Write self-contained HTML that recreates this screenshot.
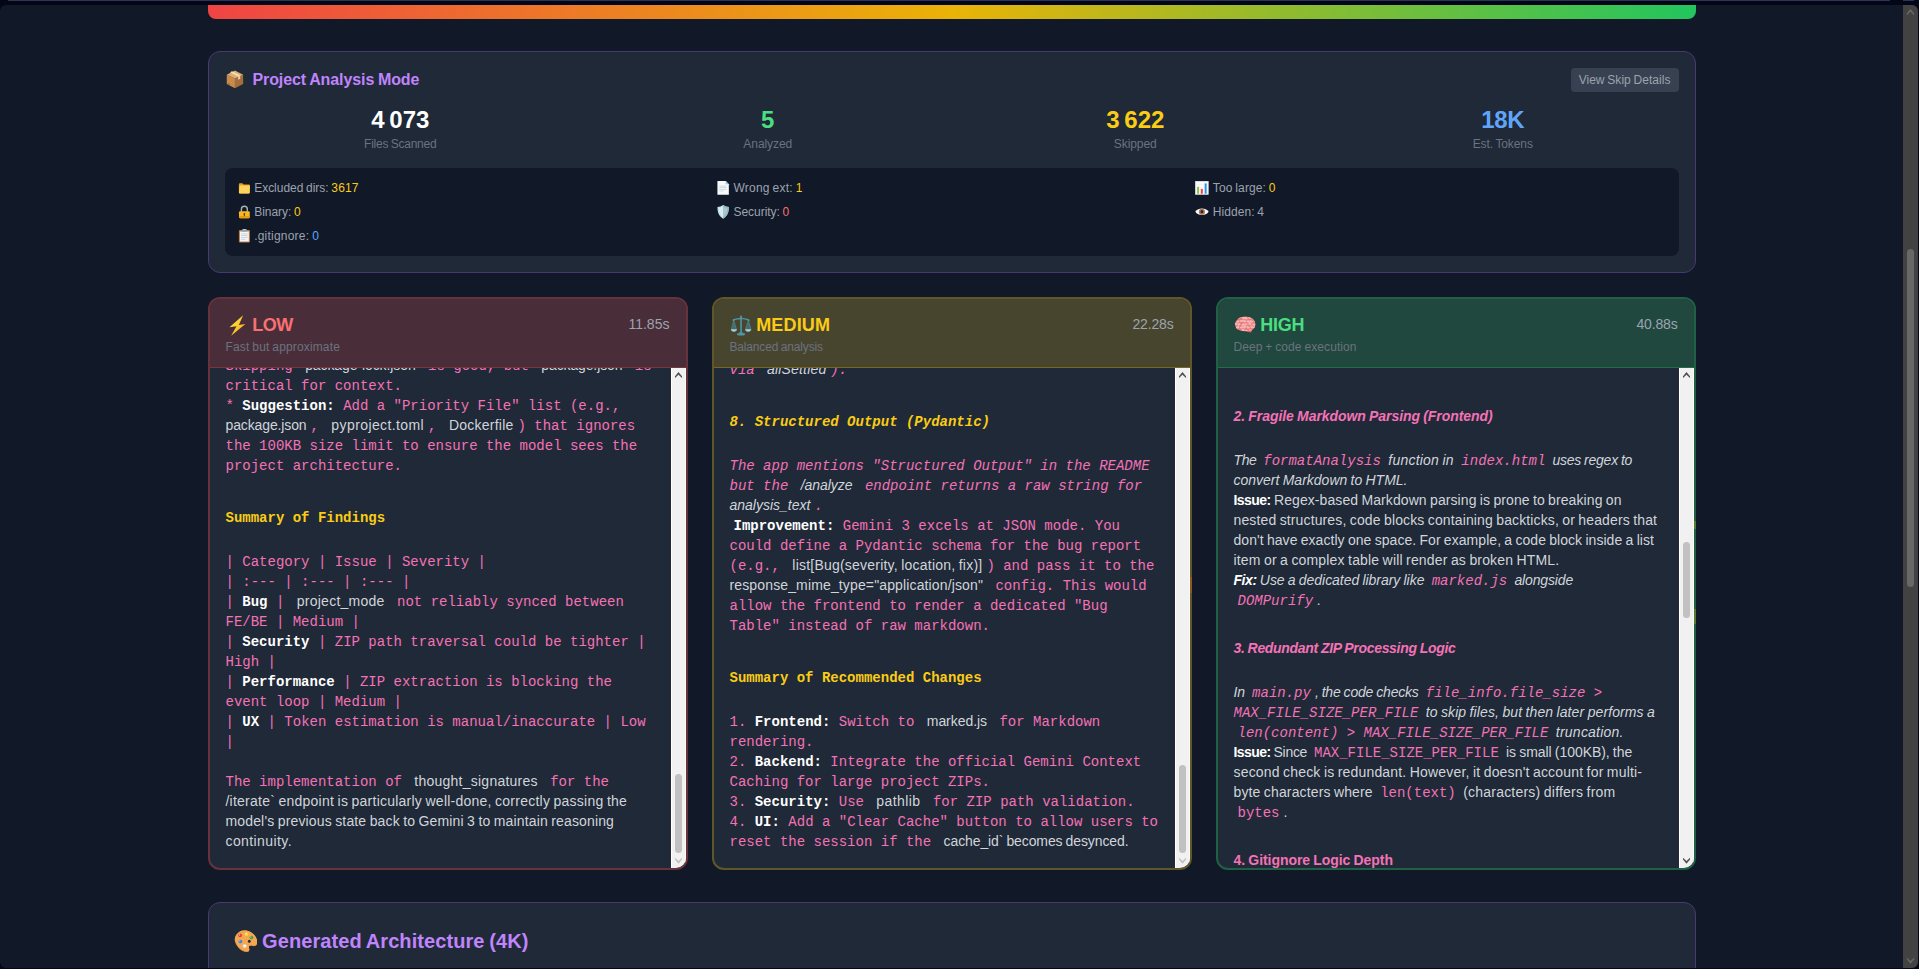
<!DOCTYPE html>
<html><head><meta charset="utf-8"><title>Project Analysis</title>
<style>
*{box-sizing:border-box}
html,body{margin:0;padding:0}
body{width:1919px;height:969px;overflow:hidden;position:relative;background:#030617;font-family:"Liberation Sans", sans-serif;color:#fff}
.em{display:inline-block;width:1.245em;height:1.174em;vertical-align:-0.247em}
#strip1{position:absolute;left:8px;top:0;width:1882px;height:1px;background:#2b3452}
#strip2{position:absolute;left:1903px;top:0;width:11px;height:1px;background:#2b3452}
#page{position:absolute;left:0;top:5px;width:1918px;height:963px;background:#111827;border-radius:6px;overflow:hidden}
#bar{position:absolute;left:208px;top:0;width:1488px;height:14px;border-radius:0 0 8px 8px;background:linear-gradient(to right,#ef4444,#eab308,#22c55e)}
.panel{position:absolute;left:208px;width:1488px;background:#1f2937;border:1px solid #4b3774;border-radius:12px}
#p1{top:46px;height:222px;padding:16px 16.5px 16px 15.5px}
#p1 .hd{display:flex;justify-content:space-between;align-items:center;height:24px;margin-bottom:12px}
#p1 .ttl{font-size:16px;line-height:24px;font-weight:700;color:#c084fc;white-space:pre}
#p1 .btn{font-size:12px;line-height:16px;padding:4px 8px;background:#374151;color:#9ca3af;border-radius:4px;white-space:pre}
.stats{display:grid;grid-template-columns:repeat(4,1fr);column-gap:16px;text-align:center}
.num{font-size:24px;line-height:32px;font-weight:700;white-space:pre}
.lab{font-size:12px;line-height:16px;color:#6b7280;white-space:pre}
.skips{margin-top:16px;background:#111827;border-radius:8px;padding:12px;height:88px;display:grid;grid-template-columns:repeat(3,1fr);column-gap:8px;row-gap:8px;font-size:12px;line-height:16px;color:#9ca3af}
.sk{white-space:pre;height:16px}
.col{position:absolute;top:292px;width:480px;height:573px;border-radius:12px;border:2px solid;overflow:hidden;background:#1f2937}
.col.low{border-color:#67323c}
.col.med{border-color:#615627}
.col.high{border-color:#206045}
.chead{position:relative;height:69px;border-bottom:1px solid;padding:12px 16px 0 15.5px}
.low .chead{background:#492e3a;border-bottom-color:#7b353d}
.med .chead{background:#48452e;border-bottom-color:#796623}
.high .chead{background:#20483f;border-bottom-color:#216e48}
.ctitle{font-size:18px;line-height:28px;font-weight:700;white-space:pre;margin-left:-1px}
.ctitle .em{margin-left:1px;vertical-align:calc(-0.247em - 0.5px)}
.low .ctitle{color:#f87171} .med .ctitle{color:#facc15} .high .ctitle{color:#4ade80}
.ctime{position:absolute;right:16.5px;top:11px;font-size:14px;line-height:28px;color:#9ca3af;white-space:pre}
.csub{font-size:12px;line-height:16px;color:#6b7280;white-space:pre}
.cbody{position:relative;height:500px;overflow:hidden;font-size:14px;line-height:20px;color:#d1d5db}
.ln{position:absolute;left:15.5px;height:20px;white-space:pre}
.c{font-family:"Liberation Mono", monospace;color:#f472b6;padding:0 4px}
.c.np{padding:0} .c.pl{padding:0 0 0 4px} .c.pr{padding:0 4px 0 0}
.c.b{color:#fff;font-weight:700}
.c.h{color:#facc15;font-weight:700}
.i{font-style:italic}
.s{color:#d1d5db}
.s.b{color:#fff;font-weight:700}
.hp{color:#f472b6;font-weight:700}
.sb{position:absolute;right:0;top:0;width:15px;height:500px;background:#f1f1f1;border-left:1px solid #fff;border-right:1px solid #fafafa}
.sba{position:absolute;left:-1px;width:15px;height:15px}
.sbt{position:absolute;left:3px;width:7px;background:#c1c1c1;border-radius:4px}
#p2{top:897px;height:120px;padding:24px 24px 24px 23.5px}
#p2 .ttl{font-size:20px;line-height:28px;font-weight:700;color:#c084fc;white-space:pre}
.tick{position:absolute;width:2px}
#msb{position:absolute;left:1903px;top:0;width:15px;height:963px;background:#424242}
#msb .th{position:absolute;left:4px;top:244px;width:7px;height:338px;background:#686868;border-radius:4px}
#msb svg{position:absolute;left:0;width:15px;height:15px}
</style></head><body>
<div id="strip1"></div><div id="strip2"></div>
<div id="page">
<div id="bar"></div>

<div class="panel" id="p1">
  <div class="hd"><div class="ttl"><svg class="em" viewBox="0 0 136 128"><polygon points="12,32 68,58 68,124 12,96" fill="#c98b4b"/><polygon points="124,32 68,58 68,124 124,96" fill="#a56e3a"/><polygon points="68,4 124,32 68,58 12,32" fill="#e0ae70"/><polygon points="34,15 48,9 104,37 90,44" fill="#f3dfc0"/><polygon points="90,44 104,37 104,60 90,67" fill="#e6d2b4"/><rect x="20" y="90" width="12" height="8" fill="#8a5a2b" transform="skewY(25) translate(0,-10)"/></svg><span style="display:inline-block;width:8px"></span><span style="letter-spacing:-0.087px;word-spacing:-0.672px">Project Analysis Mode</span></div><div class="btn"><span style="letter-spacing:0.032px;word-spacing:-0.578px">View Skip Details</span></div></div>
  <div class="stats">
    <div class="stat"><div class="num" style="color:#ffffff"><span style="letter-spacing:-0.241px;word-spacing:-0.984px">4 073</span></div><div class="lab"><span style="letter-spacing:-0.243px;word-spacing:-0.578px">Files Scanned</span></div></div>
    <div class="stat"><div class="num" style="color:#4ade80"><span style="letter-spacing:0.188px;word-spacing:-0.984px">5</span></div><div class="lab"><span style="letter-spacing:-0.070px;word-spacing:-0.578px">Analyzed</span></div></div>
    <div class="stat"><div class="num" style="color:#facc15"><span style="letter-spacing:-0.241px;word-spacing:-0.984px">3 622</span></div><div class="lab"><span style="letter-spacing:-0.060px;word-spacing:-0.578px">Skipped</span></div></div>
    <div class="stat"><div class="num" style="color:#60a5fa"><span style="letter-spacing:-0.328px;word-spacing:-0.984px">18K</span></div><div class="lab"><span style="letter-spacing:-0.097px;word-spacing:-0.578px">Est. Tokens</span></div></div>
  </div>
  <div class="skips">
    <div class="sk"><svg class="em" viewBox="0 0 136 128"><path d="M17,30 q0,-10 10,-10 h22 l12,12 h47 q10,0 10,10 v62 q0,10 -10,10 h-81 q-10,0 -10,-10 z" fill="#e59e22"/><path d="M22,48 q1,-8 9,-8 h80 q8,0 7,8 l-4,56 q-1,10 -11,10 h-75 q-10,0 -10,-10 z" fill="#fcd35c"/></svg><span style="display:inline-block;width:2.75px"></span><span style="letter-spacing:-0.026px;word-spacing:-0.578px">Excluded dirs: </span><span style="color:#facc15"><span style="letter-spacing:0.094px;word-spacing:-0.578px">3617</span></span></div>
    <div class="sk"><svg class="em" viewBox="0 0 136 128"><path d="M13,1 h76 l28,28 v95 h-104 z" fill="#f6fafd"/><polygon points="89,1 117,29 89,29" fill="#8ec4ee"/><rect x="30" y="42" width="66" height="7" fill="#c7d1d8"/><rect x="30" y="57" width="66" height="7" fill="#c7d1d8"/><rect x="30" y="72" width="66" height="7" fill="#c7d1d8"/><rect x="30" y="87" width="40" height="7" fill="#c7d1d8"/></svg><span style="display:inline-block;width:2.75px"></span><span style="letter-spacing:0.195px;word-spacing:-0.578px">Wrong ext: </span><span style="color:#facc15"><span style="letter-spacing:0.094px;word-spacing:-0.578px">1</span></span></div>
    <div class="sk"><svg class="em" viewBox="0 0 136 128"><rect x="2" y="1" width="121" height="123" fill="#fbfbfb" stroke="#d2d2d2" stroke-width="3"/><rect x="8" y="30" width="109" height="2" fill="#e4e4e4"/><rect x="8" y="55" width="109" height="2" fill="#e4e4e4"/><rect x="8" y="80" width="109" height="2" fill="#e4e4e4"/><rect x="19" y="53" width="18" height="63" fill="#8bc34a"/><rect x="53" y="72" width="18" height="44" fill="#f44336"/><rect x="88" y="22" width="18" height="94" fill="#2196f3"/></svg><span style="display:inline-block;width:2.75px"></span><span style="letter-spacing:0.099px;word-spacing:-0.578px">Too large: </span><span style="color:#facc15"><span style="letter-spacing:0.094px;word-spacing:-0.578px">0</span></span></div>
    <div class="sk"><svg class="em" viewBox="0 0 136 128"><path d="M40,62 v-24 a27,27 0 0 1 54,0 v24" stroke="#a9b2ba" stroke-width="13" fill="none"/><rect x="18" y="56" width="98" height="64" rx="11" fill="#f7b91f"/><rect x="18" y="100" width="98" height="20" rx="10" fill="#e89d12"/><circle cx="67" cy="80" r="8" fill="#5b3d0e"/><rect x="62.500" y="82" width="9" height="20" fill="#5b3d0e"/></svg><span style="display:inline-block;width:2.75px"></span><span style="letter-spacing:-0.027px;word-spacing:-0.578px">Binary: </span><span style="color:#facc15"><span style="letter-spacing:0.094px;word-spacing:-0.578px">0</span></span></div>
    <div class="sk"><svg class="em" viewBox="0 0 136 128"><path d="M65,0 C50,12 30,17 13,17 C13,70 30,104 65,124 C100,104 117,70 117,17 C100,17 80,12 65,0 z" fill="#c3dfe8"/><path d="M65,0 C80,12 100,17 117,17 C117,70 100,104 65,124 z" fill="#93b4c1"/><path d="M65,14 C54,22 40,26 26,27 C27,68 40,94 65,110 z" fill="#d6ecf2"/><path d="M65,14 C76,22 90,26 104,27 C103,68 90,94 65,110 z" fill="#a9c6d1"/></svg><span style="display:inline-block;width:2.75px"></span><span style="letter-spacing:-0.039px;word-spacing:-0.578px">Security: </span><span style="color:#f87171"><span style="letter-spacing:0.094px;word-spacing:-0.578px">0</span></span></div>
    <div class="sk"><svg class="em" viewBox="0 0 136 128"><path d="M3,61 C28,22 99,22 124,61 C99,100 28,100 3,61z" fill="#fafafa"/><circle cx="63" cy="61" r="28" fill="#a9755a"/><circle cx="63" cy="61" r="13" fill="#2a211d"/></svg><span style="display:inline-block;width:2.75px"></span><span style="letter-spacing:0.047px;word-spacing:-0.578px">Hidden: </span><span style="letter-spacing:0.094px;word-spacing:-0.578px">4</span></div>
    <div class="sk"><svg class="em" viewBox="0 0 136 128"><rect x="17" y="10" width="101" height="112" rx="9" fill="#b97c47"/><rect x="27" y="22" width="81" height="92" fill="#f1f5f8"/><rect x="37" y="42" width="61" height="6" fill="#b9c5cd"/><rect x="37" y="58" width="61" height="6" fill="#b9c5cd"/><rect x="37" y="74" width="61" height="6" fill="#b9c5cd"/><rect x="37" y="90" width="40" height="6" fill="#b9c5cd"/><rect x="44" y="2" width="48" height="24" rx="6" fill="#8fa7b3"/><rect x="56" y="0" width="24" height="10" rx="4" fill="#b7ccd6"/></svg><span style="display:inline-block;width:2.75px"></span><span style="letter-spacing:0.211px;word-spacing:-0.578px">.gitignore: </span><span style="color:#60a5fa"><span style="letter-spacing:0.094px;word-spacing:-0.578px">0</span></span></div>
  </div>
</div>

<div class="col low" style="left:208px">
  <div class="chead">
    <div class="ctitle"><svg class="em" viewBox="0 0 136 128"><defs><linearGradient id="gb" x1="0" y1="0" x2="1" y2="1"><stop offset="0.35" stop-color="#fdd835"/><stop offset="1" stop-color="#f59a1c"/></linearGradient></defs><polygon points="104,2 21,74 64,68 31,126 118,54 78,60" fill="url(#gb)"/></svg><span style="display:inline-block;width:4.27px"></span><span style="letter-spacing:-0.510px;word-spacing:-0.734px">LOW</span></div>
    <div class="ctime"><span style="letter-spacing:0.018px;word-spacing:-0.688px">11.85s</span></div>
    <div class="csub"><span style="letter-spacing:0.146px;word-spacing:-0.578px">Fast but approximate</span></div>
  </div>
  <div class="cbody">
<div class="ln " style="top:-13px"><span class="c pr ">Skipping </span><span class="s"><span style="letter-spacing:-0.090px;word-spacing:-0.688px">package-lock.json</span></span><span class="c "> is good, but </span><span class="s"><span style="letter-spacing:-0.122px;word-spacing:-0.688px">package.json</span></span><span class="c pl "> is</span></div>
<div class="ln " style="top:7px"><span class="c np ">critical for context.</span></div>
<div class="ln " style="top:27px"><span class="c np ">* </span><span class="c np b">Suggestion:</span><span class="c np "> Add a "Priority File" list (e.g.,</span></div>
<div class="ln " style="top:47px"><span class="s"><span style="letter-spacing:-0.122px;word-spacing:-0.688px">package.json</span></span><span class="c ">, </span><span class="s"><span style="letter-spacing:0.400px;word-spacing:-0.688px">pyproject.toml</span></span><span class="c ">, </span><span class="s"><span style="letter-spacing:0.234px;word-spacing:-0.688px">Dockerfile</span></span><span class="c pl ">) that ignores</span></div>
<div class="ln " style="top:67px"><span class="c np ">the 100KB size limit to ensure the model sees the</span></div>
<div class="ln " style="top:87px"><span class="c np ">project architecture.</span></div>
<div class="ln " style="top:139px"><span class="c np h">Summary of Findings</span></div>
<div class="ln " style="top:183px"><span class="c np ">| Category | Issue | Severity |</span></div>
<div class="ln " style="top:203px"><span class="c np ">| :--- | :--- | :--- |</span></div>
<div class="ln " style="top:223px"><span class="c np ">| </span><span class="c np b">Bug</span><span class="c pr "> | </span><span class="s"><span style="letter-spacing:0.255px;word-spacing:-0.688px">project_mode</span></span><span class="c pl "> not reliably synced between</span></div>
<div class="ln " style="top:243px"><span class="c np ">FE/BE | Medium |</span></div>
<div class="ln " style="top:263px"><span class="c np ">| </span><span class="c np b">Security</span><span class="c np "> | ZIP path traversal could be tighter |</span></div>
<div class="ln " style="top:283px"><span class="c np ">High |</span></div>
<div class="ln " style="top:303px"><span class="c np ">| </span><span class="c np b">Performance</span><span class="c np "> | ZIP extraction is blocking the</span></div>
<div class="ln " style="top:323px"><span class="c np ">event loop | Medium |</span></div>
<div class="ln " style="top:343px"><span class="c np ">| </span><span class="c np b">UX</span><span class="c np "> | Token estimation is manual/inaccurate | Low</span></div>
<div class="ln " style="top:363px"><span class="c np ">|</span></div>
<div class="ln " style="top:403px"><span class="c pr ">The implementation of </span><span class="s"><span style="letter-spacing:0.240px;word-spacing:-0.688px">thought_signatures</span></span><span class="c pl "> for the</span></div>
<div class="ln " style="top:423px"><span class="s"><span style="letter-spacing:0.235px;word-spacing:-0.688px">/iterate` endpoint is particularly well-done, correctly passing the</span></span></div>
<div class="ln " style="top:443px"><span class="s"><span style="letter-spacing:0.151px;word-spacing:-0.688px">model's previous state back to Gemini 3 to maintain reasoning</span></span></div>
<div class="ln " style="top:463px"><span class="s"><span style="letter-spacing:0.403px;word-spacing:-0.688px">continuity.</span></span></div>
    <div class="sb">
      <svg class="sba" style="top:0" viewBox="0 0 15 15"><polygon points="7.5,4 11,8.3 11,10 7.5,6.800 4,10 4,8.3" fill="#505050"/></svg>
      <div class="sbt" style="top:406px;height:79px"></div>
      <svg class="sba" style="bottom:0" viewBox="0 0 15 15"><polygon points="7.5,10.7 11,6.4 11,4.7 7.5,7.900 4,4.7 4,6.4" fill="#c1c1c1"/></svg>
    </div>
  </div>
</div>

<div class="col med" style="left:712px">
  <div class="chead">
    <div class="ctitle"><svg class="em" viewBox="0 0 136 128"><g transform="translate(4,0) scale(0.94,1)"><g fill="#4f97ab"><circle cx="67" cy="9" r="6.500"/><rect x="62" y="9" width="10" height="100"/><path d="M12,36 C40,24 52,27 67,25 C82,27 94,24 122,36 L122,28 C100,18 80,20 67,15 C54,20 34,18 12,28z"/><ellipse cx="67" cy="117" rx="27" ry="7.500"/><ellipse cx="67" cy="108" rx="13" ry="5"/><circle cx="20" cy="30" r="5.500"/><circle cx="114" cy="30" r="5.500"/></g><path d="M20,32 L4,88 L38,88z M114,32 L96,88 L132,88z" fill="#4f97ab" fill-opacity="0.45" stroke="#4f97ab" stroke-width="3.500"/><path d="M2,86 h38 a19,15 0 0 1 -38,0z" fill="#9fd0db"/><path d="M94,86 h38 a19,15 0 0 1 -38,0z" fill="#9fd0db"/></g></svg><span style="display:inline-block;width:4.27px"></span><span style="letter-spacing:0.154px;word-spacing:-0.734px">MEDIUM</span></div>
    <div class="ctime"><span style="letter-spacing:-0.156px;word-spacing:-0.688px">22.28s</span></div>
    <div class="csub"><span style="letter-spacing:-0.165px;word-spacing:-0.578px">Balanced analysis</span></div>
  </div>
  <div class="cbody">
<div class="ln " style="top:-9px"><span class="c pr i">via </span><span class="s i"><span style="letter-spacing:0.163px;word-spacing:-0.625px">allSettled</span></span><span class="c pl i">).</span></div>
<div class="ln " style="top:43px"><span class="c np h i">8. Structured Output (Pydantic)</span></div>
<div class="ln " style="top:87px"><span class="c np i">The app mentions "Structured Output" in the README</span></div>
<div class="ln " style="top:107px"><span class="c pr i">but the </span><span class="s i"><span style="letter-spacing:-0.047px;word-spacing:-0.625px">/analyze</span></span><span class="c pl i"> endpoint returns a raw string for</span></div>
<div class="ln " style="top:127px"><span class="s i"><span style="letter-spacing:-0.004px;word-spacing:-0.625px">analysis_text</span></span><span class="c pl i">.</span></div>
<div class="ln " style="top:147px"><span style="display:inline-block;width:4px"></span><span class="c np b">Improvement:</span><span class="c np "> Gemini 3 excels at JSON mode. You</span></div>
<div class="ln " style="top:167px"><span class="c np ">could define a Pydantic schema for the bug report</span></div>
<div class="ln " style="top:187px"><span class="c pr ">(e.g., </span><span class="s"><span style="letter-spacing:0.215px;word-spacing:-0.688px">list[Bug(severity, location, fix)]</span></span><span class="c pl ">) and pass it to the</span></div>
<div class="ln " style="top:207px"><span class="s"><span style="letter-spacing:0.137px;word-spacing:-0.688px">response_mime_type="application/json"</span></span><span class="c pl "> config. This would</span></div>
<div class="ln " style="top:227px"><span class="c np ">allow the frontend to render a dedicated "Bug</span></div>
<div class="ln " style="top:247px"><span class="c np ">Table" instead of raw markdown.</span></div>
<div class="ln " style="top:299px"><span class="c np h">Summary of Recommended Changes</span></div>
<div class="ln " style="top:343px"><span class="c np ">1. </span><span class="c np b">Frontend:</span><span class="c pr "> Switch to </span><span class="s"><span style="letter-spacing:-0.047px;word-spacing:-0.688px">marked.js</span></span><span class="c pl "> for Markdown</span></div>
<div class="ln " style="top:363px"><span class="c np ">rendering.</span></div>
<div class="ln " style="top:383px"><span class="c np ">2. </span><span class="c np b">Backend:</span><span class="c np "> Integrate the official Gemini Context</span></div>
<div class="ln " style="top:403px"><span class="c np ">Caching for large project ZIPs.</span></div>
<div class="ln " style="top:423px"><span class="c np ">3. </span><span class="c np b">Security:</span><span class="c pr "> Use </span><span class="s"><span style="letter-spacing:0.413px;word-spacing:-0.688px">pathlib</span></span><span class="c pl "> for ZIP path validation.</span></div>
<div class="ln " style="top:443px"><span class="c np ">4. </span><span class="c np b">UI:</span><span class="c np "> Add a "Clear Cache" button to allow users to</span></div>
<div class="ln " style="top:463px"><span class="c pr ">reset the session if the </span><span class="s"><span style="letter-spacing:-0.104px;word-spacing:-0.688px">cache_id` becomes desynced.</span></span></div>
    <div class="sb">
      <svg class="sba" style="top:0" viewBox="0 0 15 15"><polygon points="7.5,4 11,8.3 11,10 7.5,6.800 4,10 4,8.3" fill="#505050"/></svg>
      <div class="sbt" style="top:397px;height:88px"></div>
      <svg class="sba" style="bottom:0" viewBox="0 0 15 15"><polygon points="7.5,10.7 11,6.4 11,4.7 7.5,7.900 4,4.7 4,6.4" fill="#c1c1c1"/></svg>
    </div>
  </div>
</div>

<div class="col high" style="left:1216px">
  <div class="chead">
    <div class="ctitle"><svg class="em" viewBox="0 0 136 128"><path d="M76,88 l38,-6 l-10,24 l-26,-4z" fill="#d96565"/><clipPath id="bc"><path d="M7,62 C3,30 36,9 70,9 C106,9 131,32 130,58 C129,80 112,96 90,95 C70,101 50,100 36,92 C18,88 9,78 7,62z"/></clipPath><path d="M7,62 C3,30 36,9 70,9 C106,9 131,32 130,58 C129,80 112,96 90,95 C70,101 50,100 36,92 C18,88 9,78 7,62z" fill="#e67a7a"/><g clip-path="url(#bc)" fill="#f8b4b4"><ellipse cx="10.4" cy="18.3" rx="10.2" ry="7.4" transform="rotate(10 10.4 18.3)"/><ellipse cx="30.4" cy="15.1" rx="11.2" ry="6.9" transform="rotate(-21 30.4 15.1)"/><ellipse cx="57.0" cy="17.8" rx="11.2" ry="7.2" transform="rotate(11 57.0 17.8)"/><ellipse cx="72.9" cy="18.8" rx="11.2" ry="7.3" transform="rotate(19 72.9 18.8)"/><ellipse cx="97.0" cy="15.4" rx="11.0" ry="7.4" transform="rotate(-16 97.0 15.4)"/><ellipse cx="114.2" cy="20.2" rx="10.4" ry="7.6" transform="rotate(30 114.2 20.2)"/><ellipse cx="139.3" cy="20.5" rx="10.3" ry="7.7" transform="rotate(-4 139.3 20.5)"/><ellipse cx="24.6" cy="39.3" rx="9.7" ry="6.7" transform="rotate(-23 24.6 39.3)"/><ellipse cx="45.8" cy="36.6" rx="10.8" ry="7.0" transform="rotate(1 45.8 36.6)"/><ellipse cx="63.3" cy="36.1" rx="10.7" ry="7.4" transform="rotate(32 63.3 36.1)"/><ellipse cx="86.1" cy="39.6" rx="11.2" ry="8.0" transform="rotate(14 86.1 39.6)"/><ellipse cx="104.0" cy="39.2" rx="11.4" ry="7.9" transform="rotate(6 104.0 39.2)"/><ellipse cx="128.3" cy="35.3" rx="11.2" ry="7.4" transform="rotate(-17 128.3 35.3)"/><ellipse cx="145.4" cy="39.1" rx="11.5" ry="6.6" transform="rotate(24 145.4 39.1)"/><ellipse cx="11.5" cy="53.9" rx="10.1" ry="7.7" transform="rotate(30 11.5 53.9)"/><ellipse cx="30.3" cy="56.7" rx="9.6" ry="7.6" transform="rotate(-14 30.3 56.7)"/><ellipse cx="56.3" cy="58.9" rx="10.5" ry="8.0" transform="rotate(-15 56.3 58.9)"/><ellipse cx="72.5" cy="56.6" rx="9.6" ry="6.8" transform="rotate(-7 72.5 56.6)"/><ellipse cx="96.7" cy="53.9" rx="9.6" ry="7.8" transform="rotate(-15 96.7 53.9)"/><ellipse cx="119.8" cy="58.4" rx="10.3" ry="7.2" transform="rotate(2 119.8 58.4)"/><ellipse cx="138.9" cy="56.6" rx="10.6" ry="7.4" transform="rotate(35 138.9 56.6)"/><ellipse cx="22.0" cy="74.6" rx="10.9" ry="6.9" transform="rotate(-16 22.0 74.6)"/><ellipse cx="45.9" cy="75.1" rx="10.6" ry="6.5" transform="rotate(-7 45.9 75.1)"/><ellipse cx="64.5" cy="72.1" rx="10.7" ry="7.4" transform="rotate(-35 64.5 72.1)"/><ellipse cx="85.8" cy="74.8" rx="10.9" ry="7.0" transform="rotate(17 85.8 74.8)"/><ellipse cx="107.4" cy="72.1" rx="9.6" ry="7.5" transform="rotate(37 107.4 72.1)"/><ellipse cx="125.5" cy="74.7" rx="10.7" ry="7.0" transform="rotate(-11 125.5 74.7)"/><ellipse cx="146.9" cy="74.2" rx="10.7" ry="7.0" transform="rotate(-10 146.9 74.2)"/><ellipse cx="13.6" cy="91.2" rx="10.6" ry="7.6" transform="rotate(-15 13.6 91.2)"/><ellipse cx="31.3" cy="95.8" rx="10.0" ry="6.8" transform="rotate(-5 31.3 95.8)"/><ellipse cx="55.2" cy="91.6" rx="10.1" ry="7.0" transform="rotate(27 55.2 91.6)"/><ellipse cx="74.6" cy="96.1" rx="9.8" ry="7.0" transform="rotate(12 74.6 96.1)"/><ellipse cx="98.3" cy="93.7" rx="10.0" ry="6.7" transform="rotate(2 98.3 93.7)"/><ellipse cx="115.1" cy="95.8" rx="11.2" ry="6.8" transform="rotate(-18 115.1 95.8)"/><ellipse cx="139.8" cy="94.9" rx="11.1" ry="7.0" transform="rotate(-30 139.8 94.9)"/></g></svg><span style="display:inline-block;width:4.27px"></span><span style="letter-spacing:-0.254px;word-spacing:-0.734px">HIGH</span></div>
    <div class="ctime"><span style="letter-spacing:-0.156px;word-spacing:-0.688px">40.88s</span></div>
    <div class="csub"><span style="letter-spacing:0.081px;word-spacing:-0.578px">Deep + code execution</span></div>
  </div>
  <div class="cbody">
<div class="ln " style="top:38px"><span class="hp i"><span style="letter-spacing:-0.062px;word-spacing:-0.562px">2. Fragile Markdown Parsing (Frontend)</span></span></div>
<div class="ln " style="top:82px"><span class="s i"><span style="letter-spacing:-0.414px;word-spacing:-0.625px">The </span></span><span class="c i">formatAnalysis</span><span class="s i"><span style="letter-spacing:0.212px;word-spacing:-0.625px"> function in </span></span><span class="c i">index.html</span><span class="s i"><span style="letter-spacing:-0.232px;word-spacing:-0.625px"> uses regex to</span></span></div>
<div class="ln " style="top:102px"><span class="s i"><span style="letter-spacing:0.002px;word-spacing:-0.625px">convert Markdown to HTML.</span></span></div>
<div class="ln " style="top:122px"><span class="s b"><span style="letter-spacing:-0.555px;word-spacing:-0.578px">Issue:</span></span><span class="s"><span style="letter-spacing:0.088px;word-spacing:-0.688px"> Regex-based Markdown parsing is prone to breaking on</span></span></div>
<div class="ln " style="top:142px"><span class="s"><span style="letter-spacing:0.130px;word-spacing:-0.688px">nested structures, code blocks containing backticks, or headers that</span></span></div>
<div class="ln " style="top:162px"><span class="s"><span style="letter-spacing:0.050px;word-spacing:-0.688px">don't have exactly one space. For example, a code block inside a list</span></span></div>
<div class="ln " style="top:182px"><span class="s"><span style="letter-spacing:0.164px;word-spacing:-0.688px">item or a complex table will render as broken HTML.</span></span></div>
<div class="ln " style="top:202px"><span class="s b i"><span style="letter-spacing:-0.449px;word-spacing:-0.562px">Fix:</span></span><span class="s i"><span style="letter-spacing:-0.036px;word-spacing:-0.625px"> Use a dedicated library like </span></span><span class="c i">marked.js</span><span class="s i"><span style="letter-spacing:-0.134px;word-spacing:-0.625px"> alongside</span></span></div>
<div class="ln " style="top:222px"><span class="c i">DOMPurify</span><span class="s i"><span style="letter-spacing:-0.328px;word-spacing:-0.625px">.</span></span></div>
<div class="ln " style="top:270px"><span class="hp i"><span style="letter-spacing:-0.309px;word-spacing:-0.562px">3. Redundant ZIP Processing Logic</span></span></div>
<div class="ln " style="top:314px"><span class="s i"><span style="letter-spacing:-0.120px;word-spacing:-0.625px">In </span></span><span class="c i">main.py</span><span class="s i"><span style="letter-spacing:-0.196px;word-spacing:-0.625px">, the code checks </span></span><span class="c pl i">file_info.file_size &gt;</span></div>
<div class="ln " style="top:334px"><span class="c pr i">MAX_FILE_SIZE_PER_FILE</span><span class="s i"><span style="letter-spacing:0.101px;word-spacing:-0.625px"> to skip files, but then later performs a</span></span></div>
<div class="ln " style="top:354px"><span class="c i">len(content) &gt; MAX_FILE_SIZE_PER_FILE</span><span class="s i"><span style="letter-spacing:0.227px;word-spacing:-0.625px"> truncation.</span></span></div>
<div class="ln " style="top:374px"><span class="s b"><span style="letter-spacing:-0.555px;word-spacing:-0.578px">Issue:</span></span><span class="s"><span style="letter-spacing:-0.299px;word-spacing:-0.688px"> Since </span></span><span class="c ">MAX_FILE_SIZE_PER_FILE</span><span class="s"><span style="letter-spacing:-0.042px;word-spacing:-0.688px"> is small (100KB), the</span></span></div>
<div class="ln " style="top:394px"><span class="s"><span style="letter-spacing:0.175px;word-spacing:-0.688px">second check is redundant. However, it doesn't account for multi-</span></span></div>
<div class="ln " style="top:414px"><span class="s"><span style="letter-spacing:0.139px;word-spacing:-0.688px">byte characters where </span></span><span class="c ">len(text)</span><span class="s"><span style="letter-spacing:0.213px;word-spacing:-0.688px"> (characters) differs from</span></span></div>
<div class="ln " style="top:434px"><span class="c ">bytes</span><span class="s"><span style="letter-spacing:-0.438px;word-spacing:-0.688px">.</span></span></div>
<div class="ln " style="top:482px"><span class="hp"><span style="letter-spacing:-0.059px;word-spacing:-0.578px">4. Gitignore Logic Depth</span></span></div>
    <div class="sb">
      <svg class="sba" style="top:0" viewBox="0 0 15 15"><polygon points="7.5,4 11,8.3 11,10 7.5,6.800 4,10 4,8.3" fill="#505050"/></svg>
      <div class="sbt" style="top:174px;height:76px"></div>
      <svg class="sba" style="bottom:0" viewBox="0 0 15 15"><polygon points="7.5,10.7 11,6.4 11,4.7 7.5,7.900 4,4.7 4,6.4" fill="#505050"/></svg>
    </div>
  </div>
</div>

<div class="panel" id="p2"><div class="ttl"><svg class="em" viewBox="0 0 136 128"><path d="M61,7 C85,6 110,20 124,42 C132,56 137,74 129,84 C123,92 110,92 100,89 C90,87 84,95 88,105 C92,116 86,124 74,123 C50,122 22,100 11,66 C4,38 30,8 61,7z" fill="#c77a2c" transform="translate(0,3)"/><path d="M61,7 C85,6 110,20 124,42 C132,56 137,74 129,84 C123,92 110,92 100,89 C90,87 84,95 88,105 C92,116 86,124 74,123 C50,122 22,100 11,66 C4,38 30,8 61,7z" fill="#f3a654"/><ellipse cx="89" cy="67" rx="7.500" ry="8.500" fill="#2a2320"/><circle cx="39" cy="35" r="10" fill="#e53935"/><circle cx="36" cy="32" r="3.500" fill="#ffcdd2"/><circle cx="74" cy="28" r="10" fill="#fdd835"/><circle cx="71" cy="25" r="3.500" fill="#fff9c4"/><circle cx="101" cy="47" r="10" fill="#43a047"/><circle cx="98" cy="44" r="3.500" fill="#c8e6c9"/><circle cx="40" cy="68" r="10" fill="#1e88e5"/><circle cx="37" cy="65" r="3.500" fill="#bbdefb"/><ellipse cx="64" cy="93" rx="11" ry="10" fill="#eeeeee"/></svg><span style="display:inline-block;width:4.73px"></span><span style="letter-spacing:0.075px;word-spacing:-0.828px">Generated Architecture (4K)</span></div></div>

<div class="tick" style="left:1190px;top:572px;height:16px;background:#8a5a22"></div>
<div class="tick" style="left:1694px;top:516px;height:8px;background:#5a7a2e"></div>
<div class="tick" style="left:1694px;top:604px;height:15px;background:#5a7a2e"></div>
<div id="msb">
  <svg style="top:1px" viewBox="0 0 15 15"><polygon points="7.5,3 11.2,7.5 11.2,9.2 7.5,5.800 3.8,9.2 3.8,7.5" fill="#686868"/></svg>
  <div class="th"></div>
  <svg style="bottom:1px" viewBox="0 0 15 15"><polygon points="7.5,11.8 11.2,7.3 11.2,5.6 7.5,9 3.8,5.6 3.8,7.3" fill="#686868"/></svg>
</div>
</div>
</body></html>
